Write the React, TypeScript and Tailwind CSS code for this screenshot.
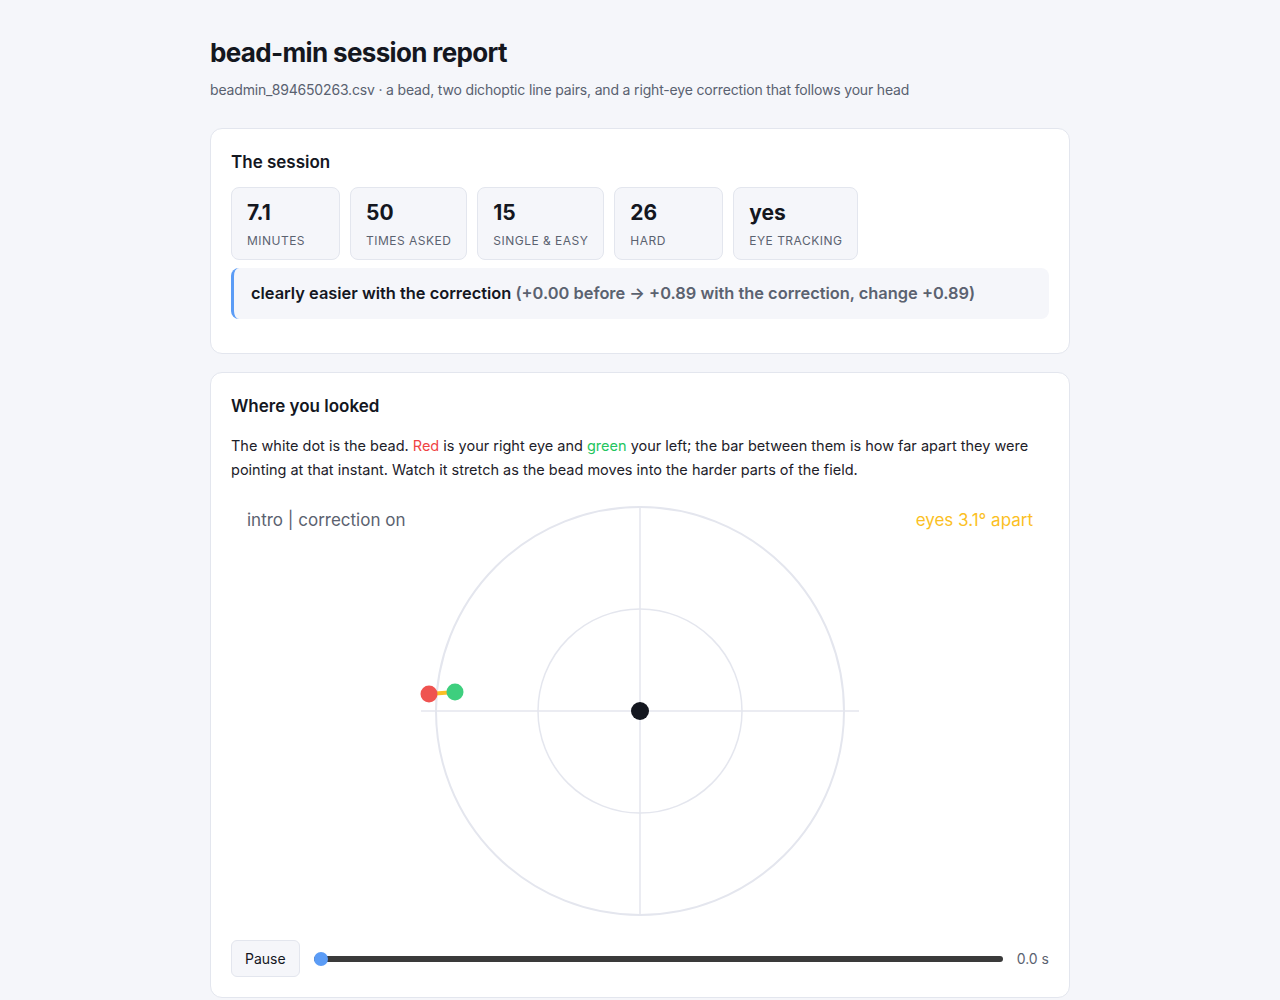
import { useState } from "react";

const stats = [
  { value: "7.1", label: "Minutes" },
  { value: "50", label: "Times asked" },
  { value: "15", label: "Single & easy" },
  { value: "26", label: "Hard" },
  { value: "yes", label: "Eye tracking" },
];

function Stat({ value, label }: { value: string; label: string }) {
  return (
    <div className="min-w-[109px] rounded-lg border border-[#e3e6ee] bg-[#f5f6fa] px-[15px] pt-[12px] pb-[10px]">
      <div className="text-[21px] font-bold leading-[26px] text-[#14171f]">{value}</div>
      <div className="mt-[7px] text-[12px] uppercase leading-[16px] tracking-[0.04em] text-[#5b6270]">
        {label}
      </div>
    </div>
  );
}

function Field() {
  // center 409,211 in canvas coordinates
  return (
    <svg width="818" height="430" viewBox="0 0 818 430" className="block">
      <line x1="409" y1="7" x2="409" y2="415" stroke="#e4e6ee" strokeWidth="1.5" />
      <line x1="190" y1="211" x2="628" y2="211" stroke="#e4e6ee" strokeWidth="1.5" />
      <circle cx="409" cy="211" r="204" fill="none" stroke="#e4e6ee" strokeWidth="2" />
      <circle cx="409" cy="211" r="102" fill="none" stroke="#e4e6ee" strokeWidth="1.5" />
      <line x1="198" y1="194" x2="224" y2="192" stroke="#fbbf24" strokeWidth="4" />
      <circle cx="198" cy="194" r="8.5" fill="#ef5350" />
      <circle cx="224" cy="192" r="8.5" fill="#3ecf7e" />
      <circle cx="409" cy="211" r="9" fill="#14171f" />
    </svg>
  );
}

export default function App() {
  const [playing, setPlaying] = useState(true);

  return (
    <div className="min-h-screen bg-[#f5f6fa] font-['Inter','Liberation_Sans',sans-serif] text-[#14171f]">
      <div className="mx-auto w-[860px] pt-[36px] pb-10">
        <h1 className="text-[26px] font-bold leading-[34px] tracking-[-0.025em]">bead-min session report</h1>
        <p className="mt-[10px] text-[14px] leading-[20px] tracking-[-0.012em] text-[#596170]">
          beadmin_894650263.csv · a bead, two dichoptic line pairs, and a right-eye correction that follows your head
        </p>

        <section className="mt-[28px] rounded-xl border border-[#e3e6ee] bg-white px-[20px] pt-[21px] pb-[34px]">
          <h2 className="text-[17px] font-semibold leading-[24px]">The session</h2>
          <div className="mt-[13px] flex gap-[10px]">
            {stats.map((s) => (
              <Stat key={s.label} value={s.value} label={s.label} />
            ))}
          </div>
          <div className="mt-[8px] rounded-lg border-l-[3px] border-[#5b9cf6] bg-[#f5f6fa] px-[17px] py-[13px] text-[16.4px] font-semibold leading-[25px]">
            clearly easier with the correction{" "}
            <span className="text-[#5b6270]">(+0.00 before → +0.89 with the correction, change +0.89)</span>
          </div>
        </section>

        <section className="mt-[18px] rounded-xl border border-[#e3e6ee] bg-white px-[20px] pt-[21px] pb-[20px]">
          <h2 className="text-[17px] font-semibold leading-[24px]">Where you looked</h2>
          <p className="mt-[16px] text-[14.5px] leading-[24px] text-[#1d2129]">
            The white dot is the bead. <span className="text-[#ef4444]">Red</span> is your right eye and{" "}
            <span className="text-[#22c55e]">green</span> your left; the bar between them is how far apart they were
            pointing at that instant. Watch it stretch as the bead moves into the harder parts of the field.
          </p>

          <div className="relative mt-[18px]">
            <Field />
            <div className="absolute left-[16px] top-[9px] text-[17px] leading-[22px] text-[#5b6270]">
              intro | correction on
            </div>
            <div className="absolute right-[16px] top-[9px] text-[17px] leading-[22px] text-[#fbbf24]">
              eyes 3.1° apart
            </div>
          </div>

          <div className="mt-[10px] flex items-center gap-[14px]">
            <button
              type="button"
              onClick={() => setPlaying(!playing)}
              className="h-[37px] rounded-md border border-[#e3e6ee] bg-[#f5f6fa] px-[13px] text-[14px] text-[#14171f]"
            >
              {playing ? "Pause" : "Play"}
            </button>
            <div className="relative h-[16px] flex-1">
              <div className="absolute left-0 right-0 top-[5px] h-[6px] rounded-full bg-[#3a3a3a]" />
              <div className="absolute left-0 top-[1px] h-[14px] w-[14px] rounded-full bg-[#5b9cf6]" />
            </div>
            <span className="text-[14px] text-[#5b6270]">0.0 s</span>
          </div>
        </section>
      </div>
    </div>
  );
}
